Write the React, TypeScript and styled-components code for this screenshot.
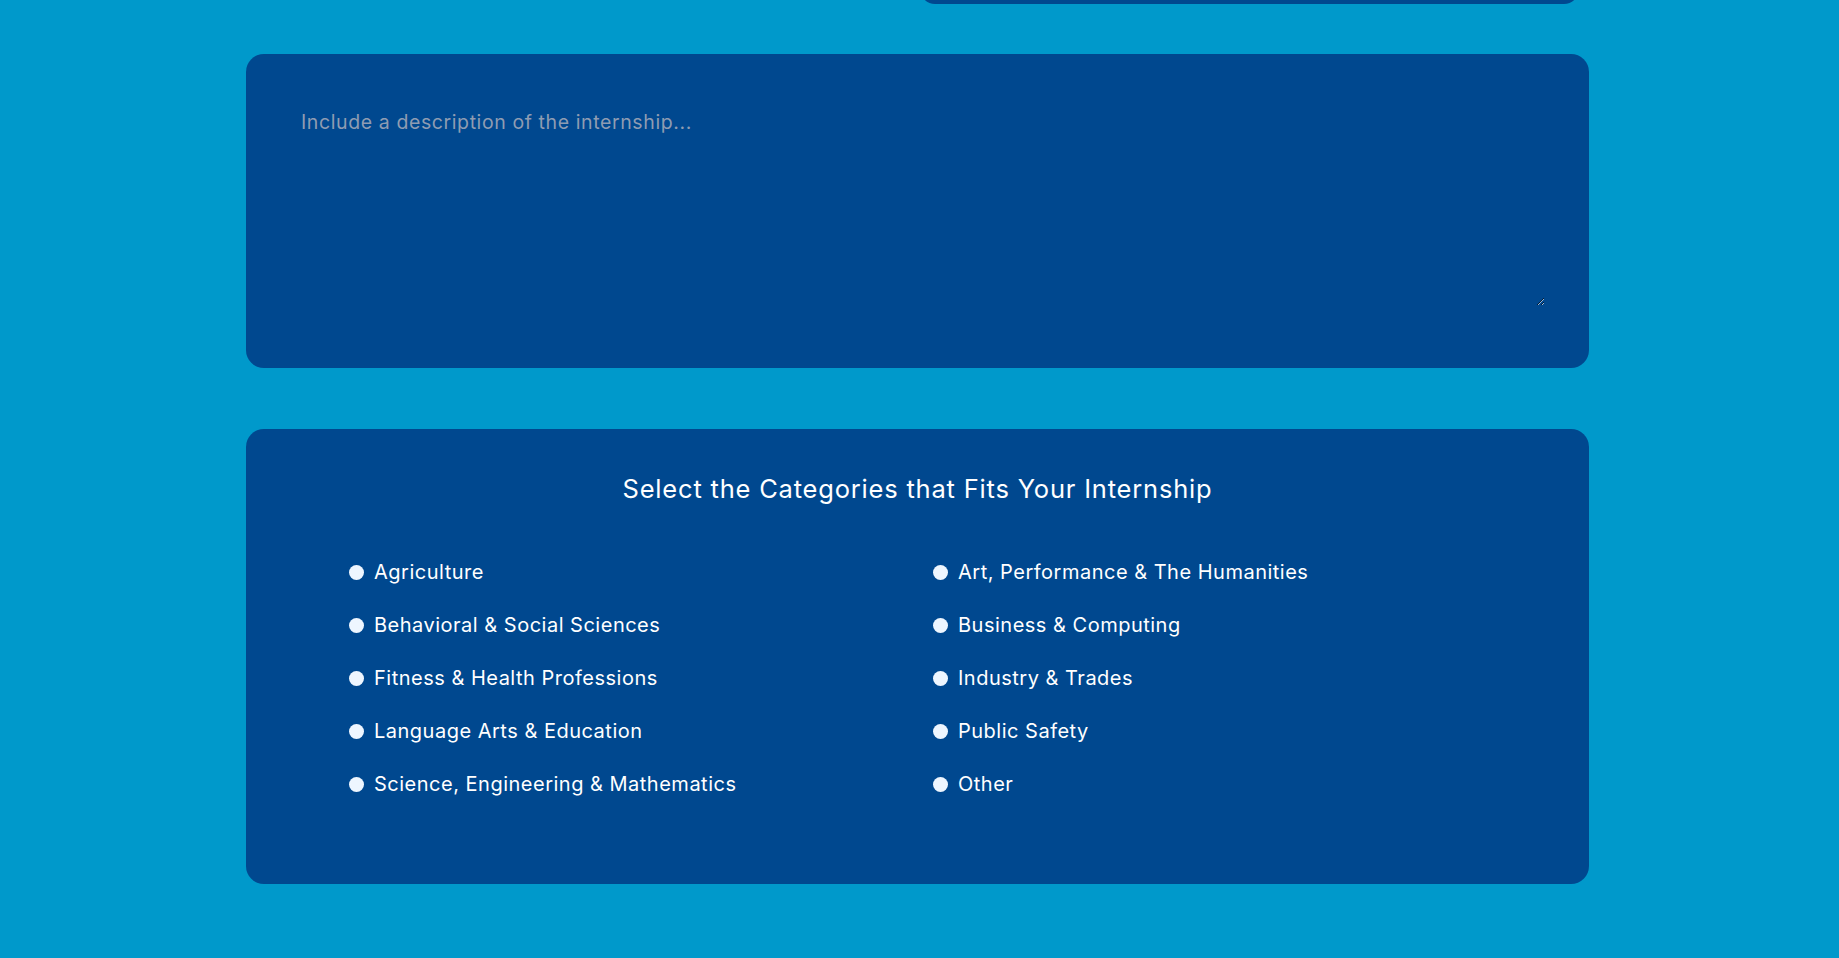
import React from "react";
import styled, { createGlobalStyle } from "styled-components";

const Global = createGlobalStyle`
  html, body {
    margin: 0;
    padding: 0;
    background: #0099cb;
  }
  body {
    font-family: Inter, "Noto Sans", sans-serif;
  }
`;

const Page = styled.div`
  box-sizing: border-box;
  min-height: 958px;
  background: #0099cb;
  display: flex;
  flex-direction: column;
  align-items: flex-start;
  padding-left: 246px;
`;

const TopStrip = styled.div`
  width: 659px;
  height: 4px;
  margin-left: 674px;
  overflow: hidden;
  display: flex;
  align-items: flex-end;
`;

const TopBox = styled.div`
  width: 100%;
  height: 30px;
  flex: none;
  background: #00488f;
  border-radius: 15px;
`;

const Card = styled.section<{ $pad: string; $mt: number }>`
  box-sizing: border-box;
  width: 1343px;
  margin-top: ${(p) => p.$mt}px;
  background: #00488f;
  border-radius: 18px;
  padding: ${(p) => p.$pad};
`;

const Description = styled.textarea`
  display: block;
  box-sizing: border-box;
  width: 100%;
  height: 202px;
  padding: 3px 6px 0 5px;
  margin: 0;
  background: transparent;
  border: none;
  outline: none;
  resize: vertical;
  color: #ffffff;
  font-family: Inter, "Noto Sans", sans-serif;
  font-size: 19.5px;
  letter-spacing: 0.6px;
  line-height: 30px;
  color-scheme: dark;
  &::placeholder {
    color: #8f9cb2;
  }
`;

const Title = styled.h2`
  margin: 0;
  text-align: center;
  color: #ffffff;
  font-family: Inter, "Noto Sans", sans-serif;
  font-weight: 400;
  font-size: 25.5px;
  letter-spacing: 0.8px;
  line-height: 34px;
`;

const CategoryGrid = styled.ul`
  list-style: none;
  margin: 50px 0 0;
  padding: 0 0 0 103px;
  display: grid;
  grid-template-columns: 584px 1fr;
  row-gap: 21px;
`;

const Category = styled.li`
  display: flex;
  align-items: center;
  gap: 10px;
  height: 32px;
  color: #ffffff;
  font-family: Inter, "Noto Sans", sans-serif;
  font-size: 20px;
  letter-spacing: 0.5px;
  cursor: pointer;
`;

const Dot = styled.span`
  flex: none;
  width: 15px;
  height: 15px;
  border-radius: 50%;
  background: #eef6ff;
`;

const left = [
  "Agriculture",
  "Behavioral & Social Sciences",
  "Fitness & Health Professions",
  "Language Arts & Education",
  "Science, Engineering & Mathematics",
];
const right = [
  "Art, Performance & The Humanities",
  "Business & Computing",
  "Industry & Trades",
  "Public Safety",
  "Other",
];

export default function App() {
  const items: string[] = [];
  left.forEach((l, i) => {
    items.push(l, right[i]);
  });
  return (
    <Page>
      <Global />
      <TopStrip>
        <TopBox />
      </TopStrip>
      <Card $mt={50} $pad="50px 44px 62px 50px">
        <Description placeholder="Include a description of the internship..." />
      </Card>
      <Card $mt={61} $pad="43px 0 84px 0">
        <Title>Select the Categories that Fits Your Internship</Title>
        <CategoryGrid>
          {items.map((t) => (
            <Category key={t}>
              <Dot />
              {t}
            </Category>
          ))}
        </CategoryGrid>
      </Card>
    </Page>
  );
}
